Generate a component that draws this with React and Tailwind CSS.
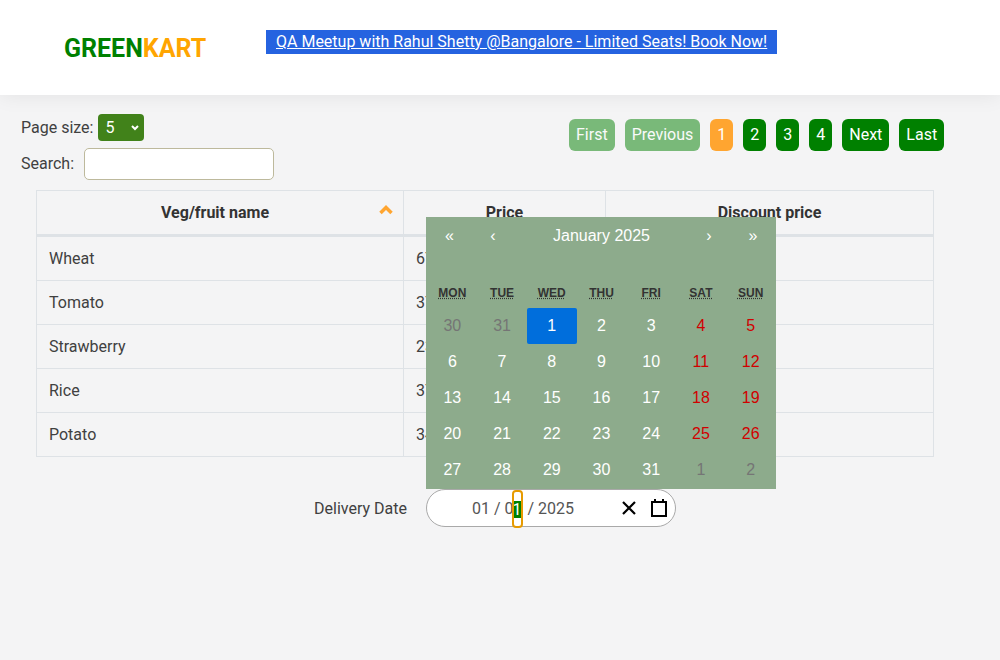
import React from "react";

const rows = [
  ["Wheat", "67", "26"],
  ["Tomato", "37", "26"],
  ["Strawberry", "23", "26"],
  ["Rice", "37", "26"],
  ["Potato", "34", "26"],
];

const weekdays = ["MON", "TUE", "WED", "THU", "FRI", "SAT", "SUN"];

// month tiles, monday first
const days = [
  30, 31, 1, 2, 3, 4, 5, 6, 7, 8, 9, 10, 11, 12, 13, 14, 15, 16, 17, 18, 19, 20,
  21, 22, 23, 24, 25, 26, 27, 28, 29, 30, 31, 1, 2,
];

const tileColor = (index) => {
  if (index < 2 || index > 32) return "text-[#757575]";
  if (index % 7 >= 5) return "text-[#d10000]";
  return "text-white";
};

const PageButton = ({ children, className }) => (
  <button className={`h-8 rounded-md px-[7px] text-white ${className}`}>
    {children}
  </button>
);

const Calendar = () => (
  <div className="absolute left-[426px] top-[217px] z-10 h-[272px] w-[350px] bg-[#8dab8c] font-['Liberation_Sans',sans-serif] text-white">
    <div className="flex h-[38px] items-center">
      <button className="w-[47px] text-center">«</button>
      <button className="w-[40px] text-center">‹</button>
      <div className="flex-1 pl-[2px] text-center">January 2025</div>
      <button className="w-[42px] text-center">›</button>
      <button className="w-[46px] text-center">»</button>
    </div>
    <div className="mt-[26px] mb-[3px] grid h-[24px] grid-cols-7 items-center pr-[0.5px] pl-[1.5px] text-center text-[12px] font-bold text-[#333]">
      {weekdays.map((day) => (
        <span key={day} className="underline decoration-dotted">
          {day}
        </span>
      ))}
    </div>
    <div className="grid grid-cols-7 pr-[0.5px] pl-[1.5px]">
      {days.map((day, i) => (
        <div
          key={i}
          className={`flex h-[36px] items-center justify-center rounded-[2px] ${
            i === 2 ? "bg-[#006edc] text-white" : tileColor(i)
          }`}
        >
          {day}
        </div>
      ))}
    </div>
  </div>
);

export default function App() {
  return (
    <div className="relative h-[660px] w-[1000px] overflow-hidden bg-[#f4f4f5] font-['Roboto',sans-serif] text-[16px] text-[#404040]">
      {/* Header */}
      <header className="flex h-[95px] items-start bg-white shadow-[0_0_20px_rgba(0,0,0,0.08)]">
        <div className="mt-[34px] ml-[64px] w-[202px] text-[25px] leading-[30px] font-bold text-[#008000]">
          GREEN<span className="text-[#ffa500]">KART</span>
        </div>
        <div className="mt-[30px] h-[24px] bg-[#2563e0] px-[10px] leading-[24px] text-white underline">
          QA Meetup with Rahul Shetty @Bangalore - Limited Seats! Book Now!
        </div>
      </header>

      {/* Controls */}
      <div className="flex h-[95px]">
        <div className="w-[569px] pl-[21px]">
          <div className="mt-[19px] flex items-center">
            <span>Page size:</span>
            <div className="ml-[5px] flex h-[27px] w-[46px] items-center justify-between rounded-[4px] bg-[#41821a] pr-[5px] pl-[7px] text-white">
              5
              <svg width="8" height="6" viewBox="0 0 8 6" fill="none" stroke="white" strokeWidth="2">
                <path d="M1 1l3 3 3-3" />
              </svg>
            </div>
          </div>
          <div className="mt-[7px] flex items-center">
            <span>Search:</span>
            <input className="ml-[10px] h-[32px] w-[190px] rounded-[5px] border border-[#bdb99c] bg-white" />
          </div>
        </div>
        <div className="mt-[24px] flex h-8 gap-[10px]">
          <PageButton className="bg-[#008000] opacity-50">First</PageButton>
          <PageButton className="bg-[#008000] opacity-50">Previous</PageButton>
          <PageButton className="bg-[#ffa530]">1</PageButton>
          <PageButton className="bg-[#008000]">2</PageButton>
          <PageButton className="bg-[#008000]">3</PageButton>
          <PageButton className="bg-[#008000]">4</PageButton>
          <PageButton className="bg-[#008000]">Next</PageButton>
          <PageButton className="bg-[#008000]">Last</PageButton>
        </div>
      </div>

      {/* Table */}
      <table className="ml-[36px] w-[898px] table-fixed border-collapse">
        <thead>
          <tr className="h-[45px] border-b-[3px] border-[#dee2e6] text-[#333]">
            <th className="relative w-[367px] border border-[#dee2e6] pr-[10px] font-bold">
              Veg/fruit name
              <svg className="absolute top-[14px] right-[10px]" width="14" height="10" viewBox="0 0 14 10" fill="none" stroke="#ffa530" strokeWidth="3.5">
                <path d="M1.5 8L7 2.5 12.5 8" />
              </svg>
            </th>
            <th className="w-[202px] border border-[#dee2e6] font-bold">Price</th>
            <th className="border border-[#dee2e6] font-bold">Discount price</th>
          </tr>
        </thead>
        <tbody>
          {rows.map(([name, price, discount], i) => (
            <tr key={name} className={i === 0 ? "h-[45px]" : "h-[44px]"}>
              <td className="border border-[#dee2e6] px-[12px]">{name}</td>
              <td className="border border-[#dee2e6] px-[12px]">{price}</td>
              <td className="border border-[#dee2e6] px-[12px]">{discount}</td>
            </tr>
          ))}
        </tbody>
      </table>

      {/* Delivery date */}
      <div className="mt-[32px] flex items-center">
        <label className="ml-[314px] w-[112px] pt-[2px]">Delivery Date</label>
        <div className="relative flex h-[38px] w-[250px] items-center rounded-[19px] border border-[#a9a9a9] bg-white pt-[2px] text-[#555]">
          <span className="ml-[45px]">01 / 0</span>
          <span className="relative flex h-[17px] w-[7px] justify-center bg-[#008000] leading-[17px] text-white">
            1
            <span className="absolute -top-[11px] -left-[2px] h-[38px] w-[11px] rounded-[4px] border-2 border-[#e69a00]" />
          </span>
          <span className="ml-[7px]">/ 2025</span>
          <svg className="absolute top-[10px] left-[194px]" width="16" height="16" viewBox="0 0 16 16" fill="none" stroke="black" strokeWidth="2.2">
            <path d="M2 2l12 12M14 2L2 14" />
          </svg>
          <svg className="absolute top-[9px] left-[224px]" width="16" height="18" viewBox="0 0 16 18" fill="none" stroke="black" strokeWidth="2">
            <rect x="1" y="3" width="14" height="14" />
            <path d="M4 0v3M12 0v3" />
          </svg>
        </div>
      </div>

      <Calendar />
    </div>
  );
}
